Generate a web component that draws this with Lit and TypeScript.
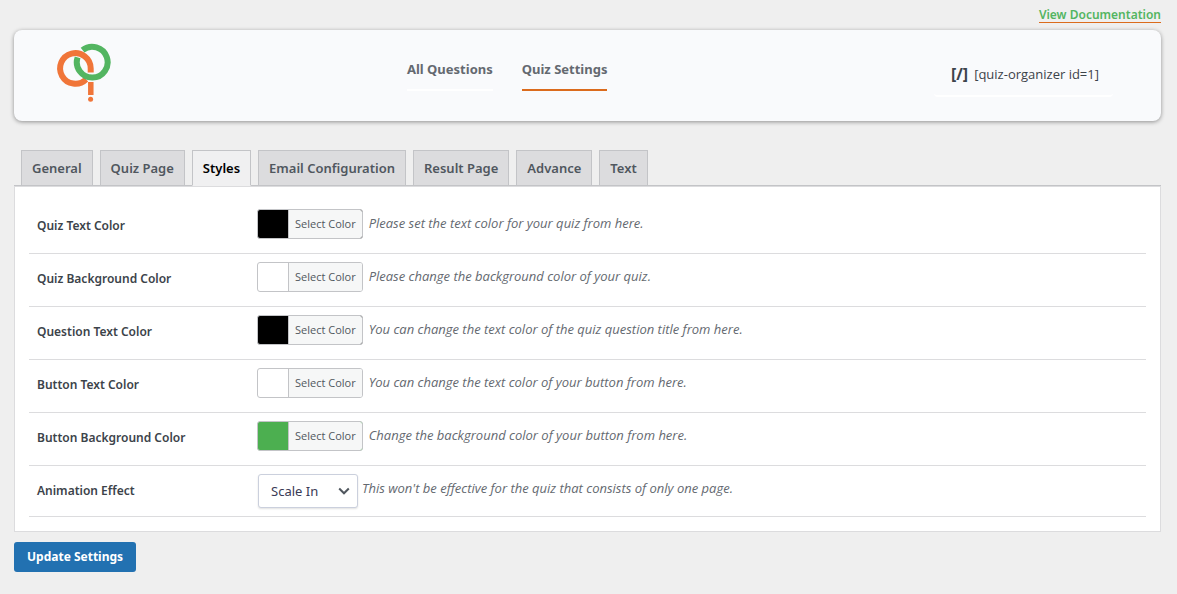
import { LitElement, html, css } from "lit";
import { customElement, property, state } from "lit/decorators.js";
import { classMap } from "lit/directives/class-map.js";

interface ColorSetting {
  id: string;
  label: string;
  color: string;
  hint: string;
}

const TABS = ["General", "Quiz Page", "Styles", "Email Configuration", "Result Page", "Advance", "Text"];

const COLORS: ColorSetting[] = [
  { id: "quiz-text", label: "Quiz Text Color", color: "#000000", hint: "Please set the text color for your quiz from here." },
  { id: "quiz-bg", label: "Quiz Background Color", color: "#ffffff", hint: "Please change the background color of your quiz." },
  { id: "question-text", label: "Question Text Color", color: "#000000", hint: "You can change the text color of the quiz question title from here." },
  { id: "button-text", label: "Button Text Color", color: "#ffffff", hint: "You can change the text color of your button from here." },
  { id: "button-bg", label: "Button Background Color", color: "#4caf50", hint: "Change the background color of your button from here." },
];

@customElement("quiz-header")
class QuizHeader extends LitElement {
  static styles = css`
    :host {
      display: grid;
      grid-template-columns: 20% 46% 1fr;
      background: #f9fafc;
      border-radius: 8px;
      box-shadow: 0 1px 4px rgba(0, 0, 0, 0.4);
      color: #3c434a;
    }
    .logo {
      padding: 12px 0 14px 40px;
    }
    .logo svg {
      display: block;
    }
    .nav {
      display: flex;
      justify-content: center;
      align-items: flex-start;
      gap: 29px;
      padding-top: 28px;
    }
    .nav a {
      padding-bottom: 9px;
      border-bottom: 2px solid #fff;
      font-size: 13px;
      line-height: 22px;
      font-weight: 700;
      color: #646970;
      text-decoration: none;
    }
    .nav a.current {
      border-bottom-color: #db6b1c;
    }
    .side {
      display: flex;
      justify-content: flex-end;
      align-items: flex-start;
      padding: 24px 48px 0 0;
    }
    .shortcode {
      display: flex;
      align-items: center;
      gap: 6px;
      border: 0;
      border-bottom: 2px solid #fff;
      border-radius: 4px;
      background: none;
      padding: 10px 14px 11px 17px;
      font: 13px/20px "Open Sans", sans-serif;
      color: #3c434a;
    }
    .mark {
      font-size: 16px;
      font-weight: 700;
    }
  `;

  render() {
    return html`
      <div class="logo">
        <svg width="60" height="65" viewBox="54 42 60 65" fill="none" role="img" aria-label="Quiz Organizer">
          <path d="M86.1 79.3A15.3 15.3 0 1 1 90.7 68.4V72.6" stroke="#f07539" stroke-width="6" />
          <path d="M82.6 50.2A15.4 15.4 0 1 1 77.6 57.4" stroke="#53b561" stroke-width="6" />
          <path d="M90.8 82V95" stroke="#f07539" stroke-width="5.5" />
          <circle cx="90.6" cy="99.3" r="2.5" fill="#f07539" />
        </svg>
      </div>
      <nav class="nav">
        <a href="#questions">All Questions</a>
        <a href="#settings" class="current" aria-current="page">Quiz Settings</a>
      </nav>
      <div class="side">
        <button type="button" class="shortcode"><span class="mark">[/]</span><span>[quiz-organizer id=1]</span></button>
      </div>
    `;
  }
}

@customElement("color-field")
class ColorField extends LitElement {
  @property() color = "#000000";
  @property() name = "";

  static styles = css`
    :host {
      display: block;
    }
    .pick {
      display: flex;
      box-sizing: border-box;
      height: 30px;
      padding: 0 0 0 30px;
      border: 1px solid #c3c4c7;
      border-radius: 3px;
      overflow: hidden;
      cursor: pointer;
    }
    .text {
      border-left: 1px solid #c3c4c7;
      background: #f6f7f7;
      padding: 0 6px;
      font: 11px/28px "Open Sans", sans-serif;
      color: #50575e;
      white-space: nowrap;
    }
  `;

  render() {
    return html`
      <button type="button" class="pick" aria-label="${this.name}: Select Color" style="background:${this.color}">
        <span class="text">Select Color</span>
      </button>
    `;
  }
}

@customElement("app-root")
class AppRoot extends LitElement {
  @state() tab = "Styles";

  static styles = css`
    :host {
      display: block;
      box-sizing: border-box;
      min-height: 100vh;
      padding: 7px 16px 22px 14px;
      background: #efefef;
      font: 13px/20px "Noto Sans", sans-serif;
      color: #3c434a;
    }
    .top {
      display: flex;
      justify-content: flex-end;
      margin-bottom: 7px;
    }
    .docs {
      border-bottom: 1px solid #db6b1c;
      font: 600 12px/15px "Noto Sans", sans-serif;
      color: #53b561;
      text-decoration: none;
    }
    .tabs {
      display: flex;
      gap: 7px;
      margin-top: 29px;
      padding: 0 7px;
      border-bottom: 1px solid #c3c4c7;
    }
    .tab {
      margin-bottom: -1px;
      padding: 5px 10px;
      border: 1px solid #c3c4c7;
      background: #dcdcde;
      font: 600 13px/24px "Noto Sans", sans-serif;
      color: #50575e;
      white-space: nowrap;
    }
    .tab.active {
      background: #f0f0f1;
      border-bottom-color: #f0f0f1;
      color: #000;
    }
    .panel {
      padding: 14px;
      border: 1px solid #dcdcde;
      background: #fff;
    }
    .row {
      display: grid;
      grid-template-columns: 220px 1fr;
      align-items: start;
      padding: 8px;
      border-bottom: 1px solid #dcdcde;
    }
    .label {
      font: 600 12px/34px "Noto Sans", sans-serif;
    }
    .control {
      display: flex;
      align-items: flex-start;
      gap: 6px;
    }
    .control.color {
      padding-bottom: 6px;
    }
    .hint {
      font-family: "Open Sans", sans-serif;
      line-height: 28px;
      font-style: italic;
      color: #646970;
    }
    .control.choice {
      gap: 4px;
      padding-left: 1px;
    }
    .select {
      display: grid;
      align-items: center;
    }
    .select select,
    .select svg {
      grid-area: 1 / 1;
    }
    .select select {
      appearance: none;
      box-sizing: border-box;
      width: 100px;
      height: 34px;
      padding: 0 24px 0 12px;
      border: 1px solid #cbd0dd;
      border-radius: 3px;
      box-shadow: 0 1px 2px rgba(0, 0, 0, 0.12);
      background: #fff;
      font: 13px/20px "Noto Sans", sans-serif;
      color: #3a3a55;
    }
    .select svg {
      justify-self: end;
      margin-right: 7px;
      pointer-events: none;
    }
    .save {
      margin-top: 10px;
      height: 30px;
      padding: 0 13px;
      border: 0;
      border-radius: 3px;
      background: #2271b1;
      font: 700 12px/30px "Noto Sans", sans-serif;
      color: #fff;
    }
  `;

  render() {
    return html`
      <div class="top"><a class="docs" href="#docs">View Documentation</a></div>
      <quiz-header></quiz-header>
      <div class="tabs" role="tablist">
        ${TABS.map(
          (t) => html`<button
            type="button"
            role="tab"
            aria-selected=${t === this.tab ? "true" : "false"}
            class=${classMap({ tab: true, active: t === this.tab })}
            @click=${() => (this.tab = t)}
          >${t}</button>`
        )}
      </div>
      <section class="panel">
        ${COLORS.map(
          (c) => html`<div class="row">
            <span class="label">${c.label}</span>
            <div class="control color">
              <color-field .color=${c.color} .name=${c.label}></color-field>
              <span class="hint">${c.hint}</span>
            </div>
          </div>`
        )}
        <div class="row">
          <label class="label" for="effect">Animation Effect</label>
          <div class="control choice">
            <div class="select">
              <select id="effect"><option>Scale In</option></select>
              <svg width="14" height="14" viewBox="0 0 14 14" fill="none">
                <path d="M2.2 4.5L7 9.3L11.8 4.5" stroke="#50575e" stroke-width="2" />
              </svg>
            </div>
            <span class="hint">This won't be effective for the quiz that consists of only one page.</span>
          </div>
        </div>
      </section>
      <button type="button" class="save">Update Settings</button>
    `;
  }
}
